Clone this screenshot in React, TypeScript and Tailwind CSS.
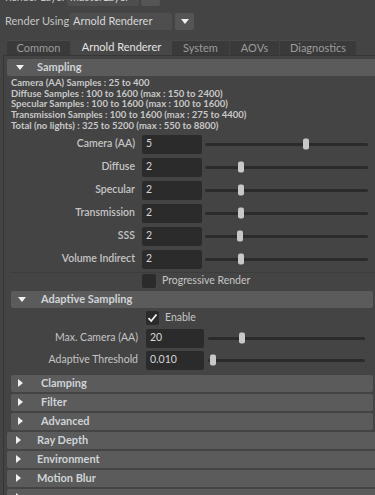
import React from 'react'

// Maya-style Render Settings panel (Arnold tab)

function Slider({ pct, right }: { pct: number; right: string }) {
  return (
    <div className={`relative h-[3px] flex-1 rounded-full bg-[#2b2b2b] ${right}`}>
      <div
        className="absolute top-1/2 h-[11px] w-[6px] -translate-y-1/2 rounded-[2px] bg-[#c8c8c8]"
        style={{ left: `${pct}%` }}
      />
    </div>
  )
}

function TriDown() {
  return (
    <svg width="8" height="5" viewBox="0 0 8 5" className="shrink-0">
      <path d="M0 0 H8 L4 5 Z" fill="#f0f0f0" />
    </svg>
  )
}

function TriRight() {
  return (
    <svg width="5" height="8" viewBox="0 0 5 8" className="shrink-0">
      <path d="M0 0 V8 L5 4 Z" fill="#f0f0f0" />
    </svg>
  )
}

function Header({ title, open, nested }: { title: string; open?: boolean; nested?: boolean }) {
  return (
    <div
      className={
        nested
          ? 'ml-[7px] mr-[2px] flex h-[17px] items-center rounded-[2px] bg-[#5b5b5b] pl-[7px]'
          : 'ml-[3px] flex h-[17px] items-center rounded-l-[2px] bg-[#5b5b5b] pl-[9px]'
      }
    >
      <div className={nested ? 'flex w-[23px] items-center' : 'flex w-[21px] items-center'}>
        {open ? <TriDown /> : <TriRight />}
      </div>
      <span className="text-[11px] font-bold text-[#cfd3d6]">{title}</span>
    </div>
  )
}

function Row({ label, value, pct }: { label: string; value: string; pct: number }) {
  return (
    <div className="flex h-[19px] items-center">
      <div className="w-[131px] text-right text-[10.5px] font-semibold text-[#c4c4c4]">{label}</div>
      <div className="ml-[7px] flex h-[19px] w-[60px] items-center rounded-[2px] bg-[#2b2b2b] pl-[4px] text-[10.5px] text-[#d6d6d6]">
        {value}
      </div>
      <div className="ml-[3px] flex flex-1 items-center">
        <Slider pct={pct} right="mr-[7px]" />
      </div>
    </div>
  )
}

function SubRow({ label, value, pct }: { label: string; value: string; pct: number }) {
  return (
    <div className="flex h-[19px] items-center">
      <div className="w-[134px] text-right text-[10.5px] text-[#c4c4c4]">{label}</div>
      <div className="ml-[8px] flex h-[19px] w-[58px] items-center rounded-[2px] bg-[#2b2b2b] pl-[4px] text-[10.5px] text-[#d6d6d6]">
        {value}
      </div>
      <div className="ml-[4px] flex flex-1 items-center">
        <Slider pct={pct} right="mr-[10px]" />
      </div>
    </div>
  )
}

const samples = [
  { label: 'Camera (AA)', value: '5', pct: 60 },
  { label: 'Diffuse', value: '2', pct: 20.5 },
  { label: 'Specular', value: '2', pct: 20.5 },
  { label: 'Transmission', value: '2', pct: 20.5 },
  { label: 'SSS', value: '2', pct: 19.5 },
  { label: 'Volume Indirect', value: '2', pct: 20 },
]

const info = [
  'Camera (AA) Samples : 25 to 400',
  'Diffuse Samples : 100 to 1600 (max : 150 to 2400)',
  'Specular Samples : 100 to 1600 (max : 100 to 1600)',
  'Transmission Samples : 100 to 1600 (max : 275 to 4400)',
  'Total (no lights) : 325 to 5200 (max : 550 to 8800)',
]

const tabs = ['Common', 'Arnold Renderer', 'System', 'AOVs', 'Diagnostics']
const tabW = ['w-[63px]', 'w-[101px]', 'w-[57px]', 'w-[49px]', 'w-[76px]']

export default function App() {
  return (
    <div className="h-[495px] w-[375px] overflow-hidden bg-[#444444] font-['Lato',sans-serif] text-[#c4c4c4]">
      {/* render layer / render using */}
      <div className="-mt-[11px] flex h-[17px] items-center pl-[5px]">
        <span className="w-[62px] whitespace-nowrap text-[10.5px]">Render Layer</span>
        <div className="flex h-[17px] w-[72px] items-center rounded-[2px] bg-[#4e4e4e] pl-[3px] text-[11px] text-[#d0d0d0]">
          masterLayer
        </div>
        <div className="ml-[2px] flex h-[17px] w-[19px] items-center justify-center rounded-[2px] bg-[#555555]">
          <TriDown />
        </div>
      </div>
      <div className="mt-[7px] flex h-[17px] items-center pl-[5px]">
        <span className="w-[65px] whitespace-nowrap text-[11px]">Render Using</span>
        <div className="flex h-[17px] w-[102px] items-center rounded-[2px] bg-[#4e4e4e] pl-[3px] text-[11px] text-[#d8d8d8]">
          Arnold Renderer
        </div>
        <div className="ml-[3px] flex h-[17px] w-[19px] items-center justify-center rounded-[2px] bg-[#555555]">
          <TriDown />
        </div>
      </div>

      {/* tabs */}
      <div className="mt-[10px] flex h-[15px] items-end pl-[7px]">
        {tabs.map((t, i) => (
          <div
            key={t}
            className={
              i === 1
                ? `${tabW[i]} flex h-[15px] items-center justify-center rounded-t-[2px] bg-[#474747] text-[11px] text-[#e4e4e4]`
                : `${tabW[i]} mr-[1px] flex h-[15px] items-center justify-center rounded-t-[2px] border-t border-[#4a4a4a] bg-[#3a3a3a] text-[11px] text-[#9c9c9c]`
            }
          >
            {t}
          </div>
        ))}
      </div>

      {/* tab body */}
      <div className="ml-[3px] border-l border-t border-[#363636] pt-[3px]">
        <Header title="Sampling" open />
        <div className="mt-[2px] pl-[7px] text-[9.5px] font-bold leading-[10.7px] text-[#c8c8c8]">
          {info.map((l) => (
            <div key={l} className="whitespace-nowrap">{l}</div>
          ))}
        </div>
        <div className="mt-[3px] flex flex-col gap-[4px]">
          {samples.map((s) => (
            <Row key={s.label} {...s} />
          ))}
        </div>
        <div className="ml-[6px] mt-[3px] border-t border-[#3d3d3d]" />
        <div className="mt-[1px] flex h-[14px] items-center">
          <div className="ml-[138px] h-[14px] w-[14px] rounded-[2px] bg-[#2b2b2b]" />
          <span className="ml-[6px] text-[10.5px] text-[#c4c4c4]">Progressive Render</span>
        </div>

        <div className="mt-[3px]">
          <Header title="Adaptive Sampling" open nested />
        </div>
        <div className="mt-[3px] flex h-[14px] items-center">
          <div className="ml-[142px] flex h-[14px] w-[13px] items-center justify-center rounded-[2px] bg-[#2b2b2b]">
            <svg width="11" height="10" viewBox="0 0 11 10">
              <path d="M1.5 5.2 L4.2 8 L9.5 1.5" fill="none" stroke="#f2f2f2" strokeWidth="1.8" />
            </svg>
          </div>
          <span className="ml-[6px] text-[10.5px] text-[#c4c4c4]">Enable</span>
        </div>
        <div className="mt-[4px] flex flex-col gap-[3px]">
          <SubRow label="Max. Camera (AA)" value="20" pct={19.5} />
          <SubRow label="Adaptive Threshold" value="0.010" pct={1.5} />
        </div>

        <div className="mt-[5px] flex flex-col gap-[2px]">
          <Header title="Clamping" nested />
          <Header title="Filter" nested />
          <Header title="Advanced" nested />
          <Header title="Ray Depth" />
          <Header title="Environment" />
          <Header title="Motion Blur" />
          <Header title="" />
        </div>
      </div>
    </div>
  )
}
